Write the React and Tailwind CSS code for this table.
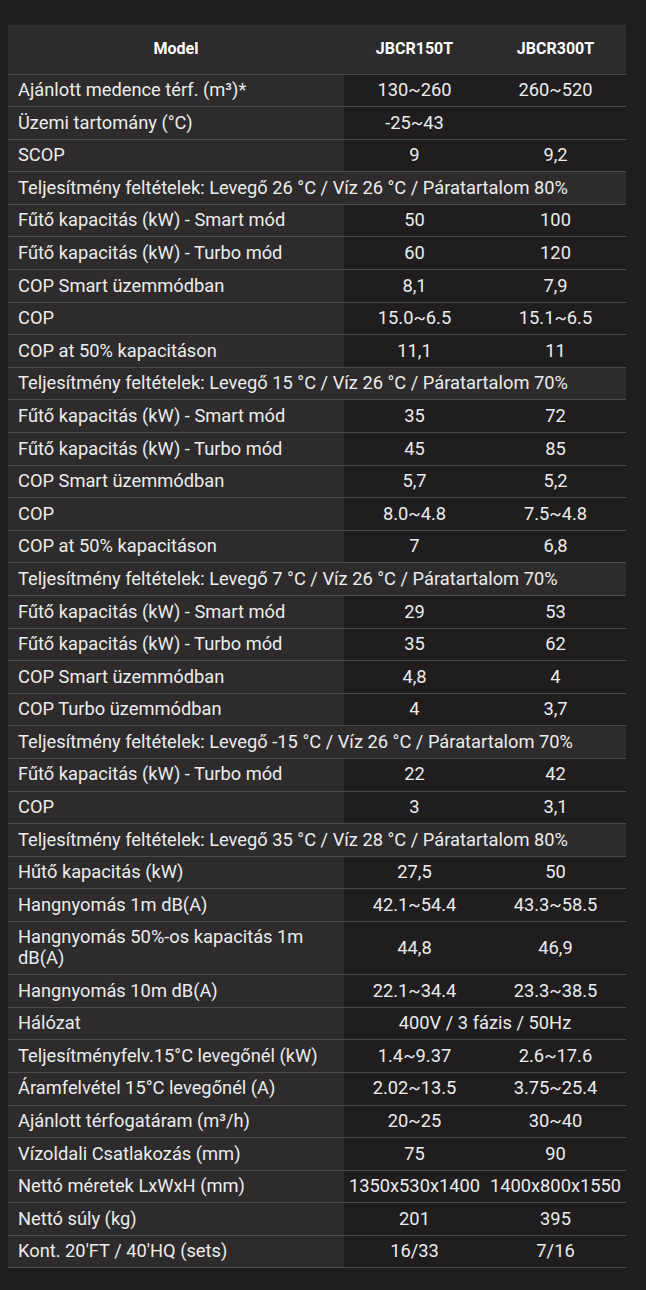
import React from 'react';

const rows = [
  ['Ajánlott medence térf. (m³)*', '130~260', '260~520'],
  ['Üzemi tartomány (°C)', '-25~43', ''],
  ['SCOP', '9', '9,2'],
  ['Teljesítmény feltételek: Levegő 26 °C / Víz 26 °C / Páratartalom 80%'],
  ['Fűtő kapacitás (kW) - Smart mód', '50', '100'],
  ['Fűtő kapacitás (kW) - Turbo mód', '60', '120'],
  ['COP Smart üzemmódban', '8,1', '7,9'],
  ['COP', '15.0~6.5', '15.1~6.5'],
  ['COP at 50% kapacitáson', '11,1', '11'],
  ['Teljesítmény feltételek: Levegő 15 °C / Víz 26 °C / Páratartalom 70%'],
  ['Fűtő kapacitás (kW) - Smart mód', '35', '72'],
  ['Fűtő kapacitás (kW) - Turbo mód', '45', '85'],
  ['COP Smart üzemmódban', '5,7', '5,2'],
  ['COP', '8.0~4.8', '7.5~4.8'],
  ['COP at 50% kapacitáson', '7', '6,8'],
  ['Teljesítmény feltételek: Levegő 7 °C / Víz 26 °C / Páratartalom 70%'],
  ['Fűtő kapacitás (kW) - Smart mód', '29', '53'],
  ['Fűtő kapacitás (kW) - Turbo mód', '35', '62'],
  ['COP Smart üzemmódban', '4,8', '4'],
  ['COP Turbo üzemmódban', '4', '3,7'],
  ['Teljesítmény feltételek: Levegő -15 °C / Víz 26 °C / Páratartalom 70%'],
  ['Fűtő kapacitás (kW) - Turbo mód', '22', '42'],
  ['COP', '3', '3,1'],
  ['Teljesítmény feltételek: Levegő 35 °C / Víz 28 °C / Páratartalom 80%'],
  ['Hűtő kapacitás (kW)', '27,5', '50'],
  ['Hangnyomás 1m dB(A)', '42.1~54.4', '43.3~58.5'],
  ['Hangnyomás 50%-os kapacitás 1m dB(A)', '44,8', '46,9'],
  ['Hangnyomás 10m dB(A)', '22.1~34.4', '23.3~38.5'],
  ['Hálózat', '400V / 3 fázis / 50Hz', null],
  ['Teljesítményfelv.15°C levegőnél (kW)', '1.4~9.37', '2.6~17.6'],
  ['Áramfelvétel 15°C levegőnél (A)', '2.02~13.5', '3.75~25.4'],
  ['Ajánlott térfogatáram (m³/h)', '20~25', '30~40'],
  ['Vízoldali Csatlakozás (mm)', '75', '90'],
  ['Nettó méretek LxWxH (mm)', '1350x530x1400', '1400x800x1550'],
  ['Nettó súly (kg)', '201', '395'],
  ["Kont. 20'FT / 40'HQ (sets)", '16/33', '7/16'],
];

const cell = 'border-b border-[#4a4849] py-[5.5px] leading-[20.6px]';

export default function App() {
  return (
    <div className="min-h-[1290px] bg-[#1f1d1e] pt-[25px] pl-[8px] pr-[20px] pb-[20px] font-['Roboto',sans-serif] text-[18.3px] text-[#ececec]">
      <table className="w-[618px] table-fixed border-collapse">
        <colgroup>
          <col className="w-[336px]" />
          <col className="w-[141px]" />
          <col className="w-[141px]" />
        </colgroup>
        <thead>
          <tr className="bg-[#2d2b2c] text-[16px] font-bold text-white">
            <th className="h-[49px] border-b border-[#4a4849] text-center">Model</th>
            <th className="h-[49px] border-b border-[#4a4849] text-center">JBCR150T</th>
            <th className="h-[49px] border-b border-[#4a4849] text-center">JBCR300T</th>
          </tr>
        </thead>
        <tbody>
          {rows.map((r, i) => {
            if (r.length === 1) {
              return (
                <tr key={i} className="bg-[#2d2b2c]">
                  <td colSpan="3" className={`${cell} px-[10px] whitespace-nowrap`}>{r[0]}</td>
                </tr>
              );
            }
            return (
              <tr key={i}>
                <td className={`${cell} bg-[#2d2b2c] px-[10px]`}>{r[0]}</td>
                {r[2] === null ? (
                  <td colSpan="2" className={`${cell} text-center`}>{r[1]}</td>
                ) : (
                  <>
                    <td className={`${cell} text-center whitespace-nowrap`}>{r[1]}</td>
                    <td className={`${cell} text-center whitespace-nowrap`}>{r[2]}</td>
                  </>
                )}
              </tr>
            );
          })}
        </tbody>
      </table>
    </div>
  );
}
